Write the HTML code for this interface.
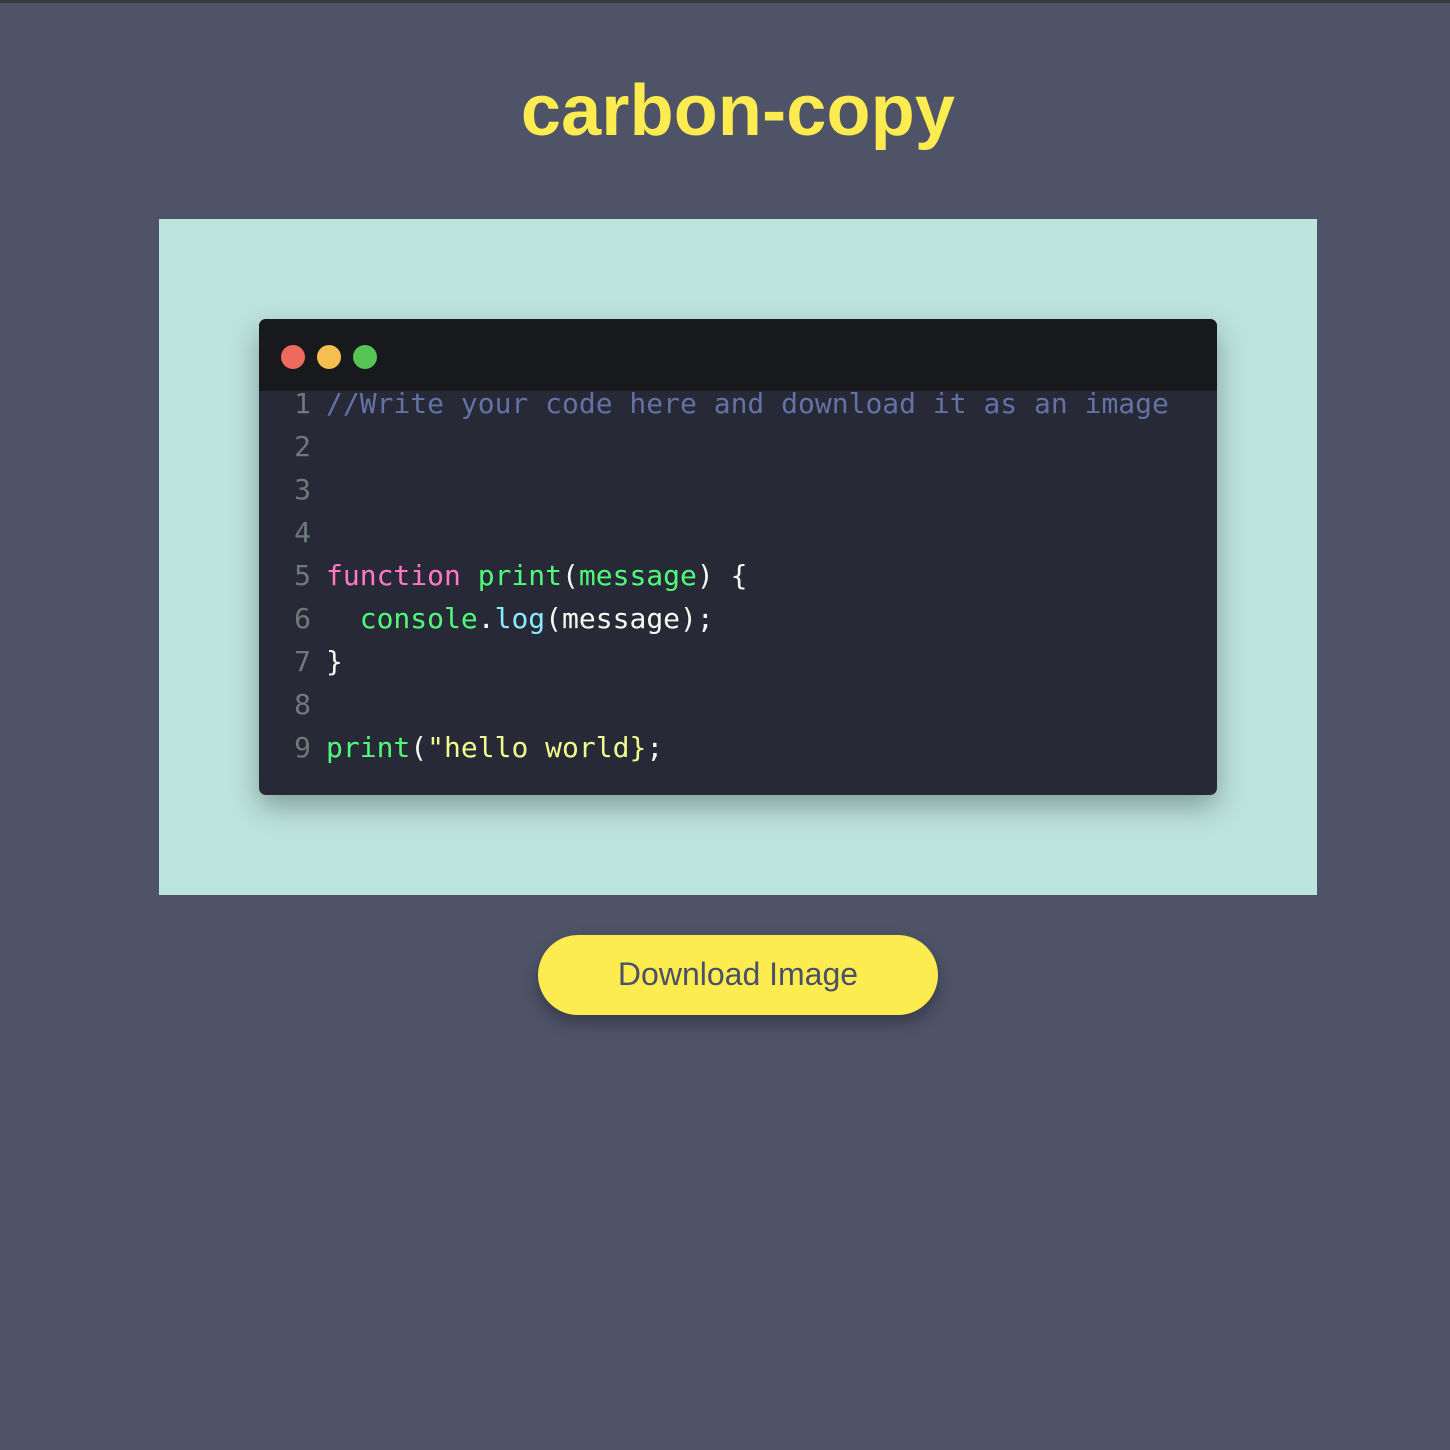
<!DOCTYPE html>
<html><head><meta charset="utf-8"><style>
html,body{margin:0;padding:0}
body{width:1450px;height:1450px;background:#4e5368;position:relative;overflow:hidden;font-family:"Liberation Sans",sans-serif}
.top{position:absolute;left:0;top:0;width:1450px;height:3px;background:#38393e}
h1{position:absolute;left:13px;width:1450px;top:66px;margin:0;text-align:center;font-size:72px;line-height:90px;font-weight:bold;color:#fdec4f;letter-spacing:0.2px}
.bg{position:absolute;left:159px;top:219px;width:1158px;height:676px;background:#bce4dc}
.card{position:absolute;left:259px;top:319px;width:958px;height:476px;background:#272936;border-radius:7px;box-shadow:0 12px 28px rgba(0,0,0,0.3);overflow:hidden}
.hd{height:72px;background:#18191c}
.dot{position:absolute;top:26px;width:24px;height:24px;border-radius:50%}
pre{position:absolute;left:0;top:63px;margin:0;font-family:"DejaVu Sans Mono","Liberation Mono",monospace;font-size:28px;line-height:43px;color:#f8f8f2}
.n{color:#6e7a7a;display:inline-block;width:52px;text-align:right;margin-right:15px}
.c{color:#6272a4}.k{color:#ff79c6}.g{color:#50fa7b}.b{color:#8be9fd}.y{color:#f1fa8c}
.btn{position:absolute;left:538px;top:935px;width:400px;height:80px;border-radius:40px;background:#fdec4f;box-shadow:0 8px 16px rgba(0,0,0,0.3);color:#4a5068;font-size:32px;line-height:78px;text-align:center}
</style></head><body>
<div class="top"></div>
<h1>carbon-copy</h1>
<div class="bg"></div>
<div class="card"><div class="hd"></div>
<div class="dot" style="left:22px;background:#ed6a5e"></div>
<div class="dot" style="left:58px;background:#f5bf4f"></div>
<div class="dot" style="left:94px;background:#55c454"></div>
<pre><span class="n">1</span><span class="c">//Write your code here and download it as an image</span>
<span class="n">2</span>
<span class="n">3</span>
<span class="n">4</span>
<span class="n">5</span><span class="k">function</span> <span class="g">print</span>(<span class="g">message</span>) {
<span class="n">6</span>  <span class="g">console</span>.<span class="b">log</span>(message);
<span class="n">7</span>}
<span class="n">8</span>
<span class="n">9</span><span class="g">print</span>(<span class="y">"hello world}</span>;</pre>
</div>
<div class="btn">Download Image</div>
</body></html>
